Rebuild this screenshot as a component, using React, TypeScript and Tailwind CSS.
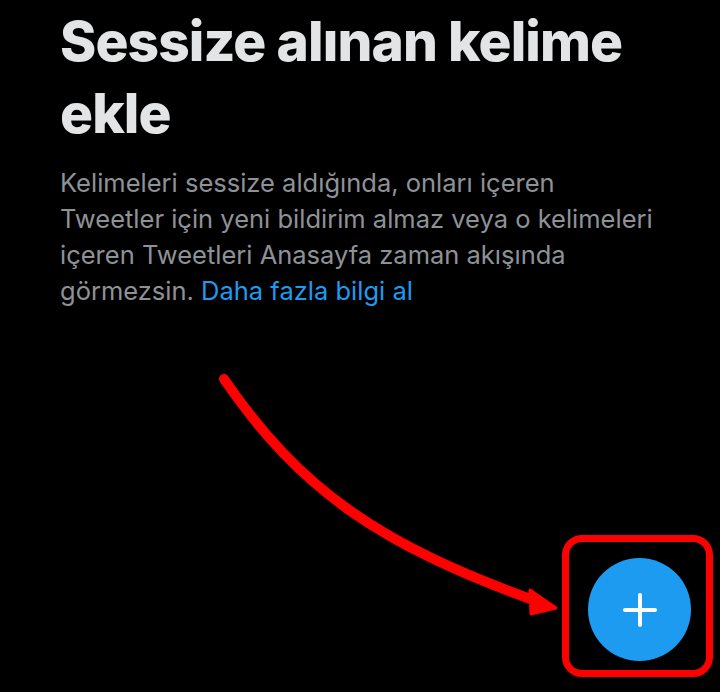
import React from 'react';

const lines = [
  'Kelimeleri sessize aldığında, onları içeren',
  'Tweetler için yeni bildirim almaz veya o kelimeleri',
  'içeren Tweetleri Anasayfa zaman akışında',
];

export default function App() {
  return (
    <div
      className="relative w-[720px] h-[692px] overflow-hidden bg-black"
      style={{ fontFamily: 'Inter, "Noto Sans", sans-serif' }}
    >
      <div className="flex flex-col pl-[60px] pt-[5px]">
        <h1 className="text-[55px] leading-[72px] font-extrabold tracking-[-0.9px] text-[#e2e4e5]">
          Sessize alınan kelime
          <br />
          ekle
        </h1>
        <p className="mt-[16px] text-[25.5px] leading-[36px] text-[#8e9297]">
          {lines.map((l) => (
            <React.Fragment key={l}>
              {l}
              <br />
            </React.Fragment>
          ))}
          görmezsin. <span className="text-[#1d9bf0]">Daha fazla bilgi al</span>
        </p>
      </div>

      {/* floating compose button */}
      <button className="absolute left-[588px] top-[558px] w-[103px] h-[103px] rounded-full bg-[#1d9bf0] flex items-center justify-center">
        <svg width="34" height="34" viewBox="0 0 34 34">
          <path d="M17 2v30M2 17h30" stroke="white" strokeWidth="4" strokeLinecap="round" />
        </svg>
      </button>

      {/* red annotation */}
      <div className="absolute left-[562px] top-[535px] w-[151px] h-[142px] rounded-[20px] border-[7px] border-[#ff0000]" />
      <svg className="absolute inset-0 pointer-events-none" width="720" height="692">
        <path
          d="M224 379 C 300 490, 380 545, 536 601"
          fill="none"
          stroke="#ff0000"
          strokeWidth="10"
          strokeLinecap="round"
        />
        <path d="M530 590 L556 608 L531 614 Z" fill="#ff0000" stroke="#ff0000" strokeWidth="3" strokeLinejoin="round" />
      </svg>
    </div>
  );
}
